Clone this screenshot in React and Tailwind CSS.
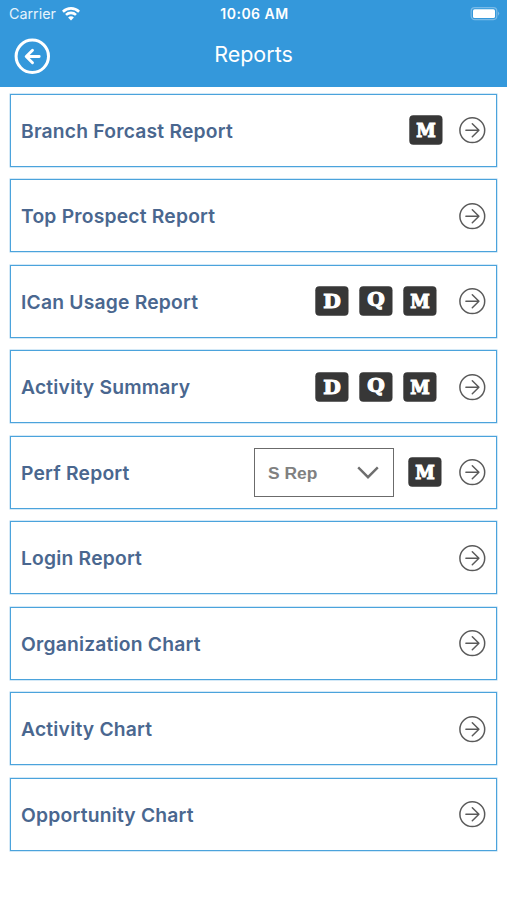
import React from "react";

const reports = [
  { title: "Branch Forcast Report", badges: ["M"], end: "mr-[15px]" },
  { title: "Top Prospect Report", badges: [], end: "" },
  { title: "ICan Usage Report", badges: ["D", "Q", "M"], end: "mr-[21px]" },
  { title: "Activity Summary", badges: ["D", "Q", "M"], end: "mr-[21px]" },
  { title: "Perf Report", badges: ["M"], end: "mr-[16px]", select: "S Rep" },
  { title: "Login Report", badges: [], end: "" },
  { title: "Organization Chart", badges: [], end: "" },
  { title: "Activity Chart", badges: [], end: "" },
  { title: "Opportunity Chart", badges: [], end: "" },
];

function Wifi() {
  return (
    <svg className="ml-[6px] h-[14px] w-[18px]" viewBox="0 0 18 14" fill="none" stroke="white" strokeWidth="2.6">
      <path d="M0.9 4.7C5.5 0.2 12.5 0.2 17.1 4.7" />
      <path d="M4 7.9C6.8 5.2 11.2 5.2 14 7.9" />
      <path d="M9 13.4 6.1 10.4C7.7 8.9 10.3 8.9 11.9 10.4Z" fill="white" stroke="none" />
    </svg>
  );
}

function Battery() {
  return (
    <svg className="h-[14px] w-[30px]" viewBox="0 0 30 14">
      <rect x="1.2" y="0.6" width="25.6" height="12" rx="3.5" fill="none" stroke="#79bae7" strokeWidth="1.2" />
      <rect x="3" y="2.3" width="22" height="8.8" rx="1.6" fill="white" />
      <path d="M28 4.5Q30.4 6.6 28 8.7Z" fill="#79bae7" />
    </svg>
  );
}

function BackArrow() {
  return (
    <svg className="h-[36px] w-[36px]" viewBox="0 0 36 36" fill="none" stroke="white" strokeLinecap="round" strokeLinejoin="round">
      <circle cx="18.3" cy="18.3" r="16.2" strokeWidth="3" />
      <path d="M25.2 18.5H12.5M18.5 12.3 12.2 18.5l6.3 6.2" strokeWidth="2.9" />
    </svg>
  );
}

function GoArrow() {
  return (
    <svg className="h-[28px] w-[28px] shrink-0" viewBox="0 0 28 28" fill="none" stroke="#5a5a5a" strokeWidth="1.5" strokeLinecap="round" strokeLinejoin="round">
      <circle cx="14.3" cy="14.2" r="12.4" />
      <path d="M7.9 14.2h13M14.3 7.7l6.6 6.5-6.6 6.5" />
    </svg>
  );
}

function Badge({ letter }) {
  return (
    <svg className="h-[30px] w-[34px]" viewBox="0 0 34 30">
      <rect x="0.3" y="0.3" width="33.2" height="29.4" rx="4" fill="#373737" />
      <text
        x="17"
        y={letter === "Q" ? 19.8 : 21.6}
        textAnchor="middle"
        textLength={letter === "M" ? 19.5 : 17.5}
        lengthAdjust="spacingAndGlyphs"
        className="font-['DejaVu_Serif',serif] text-[18.5px] font-bold"
        fill="white"
        stroke="white"
        strokeWidth="1.1"
      >
        {letter}
      </text>
    </svg>
  );
}

function RepSelect({ label }) {
  return (
    <div className="mr-[14px] flex h-[49px] w-[140px] items-center justify-between border-[1.5px] border-[#6b6b6b] pr-[14px] pl-[13px]">
      <span className="pt-[2px] font-['Liberation_Sans',sans-serif] text-[17.4px] font-bold text-[#808080]">{label}</span>
      <svg className="h-[14px] w-[22px]" viewBox="0 0 22 14" fill="none" stroke="#6e6e6e" strokeWidth="2.4">
        <path d="M1.2 2.3 11 12.2 20.8 2.3" />
      </svg>
    </div>
  );
}

export default function App() {
  return (
    <div className="h-[900px] w-[507px] overflow-hidden bg-white font-['Inter',sans-serif]">
      <header className="h-[87px] bg-[#3498db] text-white">
        <div className="grid h-[28px] grid-cols-3 items-center pr-[7px] pl-[9px]">
          <div className="flex items-center text-[14.3px] text-[#e6f3fc]">
            Carrier
            <Wifi />
          </div>
          <div className="pb-px text-center text-[14px] font-semibold tracking-[0.5px]">10:06 AM</div>
          <div className="flex justify-end"><Battery /></div>
        </div>
        <div className="grid h-[56px] grid-cols-[36px_1fr_36px] items-center px-[14px]">
          <BackArrow />
          <h1 className="pb-[3px] text-center text-[21.5px]">Reports</h1>
        </div>
      </header>
      <main className="flex flex-col gap-[12.5px] pt-[6.5px] pr-[10px] pl-[10px]">
        {reports.map((r) => (
          <div key={r.title} className="flex h-[73px] items-center border-[1.5px] border-[#4ba3dc] pr-[10px] pl-[10px] shadow-[0_0_0_0.5px_#a9d3ef]">
            <span className="grow pt-[2px] text-[19.3px] font-semibold tracking-[0.2px] text-[#4a678f]">{r.title}</span>
            {r.select && <RepSelect label={r.select} />}
            <div className={`flex gap-[10px] ${r.end}`}>
              {r.badges.map((b) => <Badge key={b} letter={b} />)}
            </div>
            <GoArrow />
          </div>
        ))}
      </main>
    </div>
  );
}
